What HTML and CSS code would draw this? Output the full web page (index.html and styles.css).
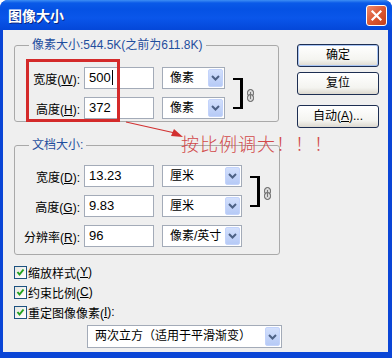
FILE: index.html
```html
<!DOCTYPE html>
<html>
<head>
  <meta charset="utf-8">
  <title>图像大小</title>
  <link rel="stylesheet" href="styles.css">
</head>
<body>
  <div class="window">
    <div class="titlebar">
      <span class="title">图像大小</span>
      <span class="close">
        <svg width="13" height="13" viewBox="0 0 13 13"><path d="M2.5 2.5 L10.5 10.5 M10.5 2.5 L2.5 10.5" stroke="#fff" stroke-width="2.2" stroke-linecap="square"/></svg>
      </span>
    </div>

    <div class="client">
      <div class="left">
        <fieldset class="group g1">
          <legend>像素大小:544.5K(之前为611.8K)</legend>
          <div class="linked">
            <div class="rows">
              <div class="row">
                <label>宽度(<u>W</u>):</label>
                <div class="field">500<span class="caret"></span></div>
                <div class="select s1"><span class="val">像素</span><span class="drop"><svg width="9" height="6" viewBox="0 0 9 6"><path d="M1 1 L4.5 4.5 L8 1" fill="none" stroke="#4d6185" stroke-width="2"/></svg></span></div>
              </div>
              <div class="row">
                <label>高度(<u>H</u>):</label>
                <div class="field">372</div>
                <div class="select s1"><span class="val">像素</span><span class="drop"><svg width="9" height="6" viewBox="0 0 9 6"><path d="M1 1 L4.5 4.5 L8 1" fill="none" stroke="#4d6185" stroke-width="2"/></svg></span></div>
              </div>
            </div>
            <div class="link">
              <div class="bracket"></div>
              <svg class="chain" width="7" height="13" viewBox="0 0 7 13"><rect x="0.5" y="0.5" width="6" height="7" rx="3" fill="#d8d8d8" stroke="#555"/><rect x="0.5" y="5.5" width="6" height="7" rx="3" fill="#d8d8d8" stroke="#555"/><path d="M3.5 3 V10" stroke="#777"/></svg>
            </div>
          </div>
        </fieldset>

        <fieldset class="group g2">
          <legend>文档大小:</legend>
          <div class="linked">
            <div class="rows">
              <div class="row">
                <label>宽度(<u>D</u>):</label>
                <div class="field">13.23</div>
                <div class="select s2"><span class="val">厘米</span><span class="drop"><svg width="9" height="6" viewBox="0 0 9 6"><path d="M1 1 L4.5 4.5 L8 1" fill="none" stroke="#4d6185" stroke-width="2"/></svg></span></div>
              </div>
              <div class="row">
                <label>高度(<u>G</u>):</label>
                <div class="field">9.83</div>
                <div class="select s2"><span class="val">厘米</span><span class="drop"><svg width="9" height="6" viewBox="0 0 9 6"><path d="M1 1 L4.5 4.5 L8 1" fill="none" stroke="#4d6185" stroke-width="2"/></svg></span></div>
              </div>
            </div>
            <div class="link">
              <div class="bracket"></div>
              <svg class="chain" width="7" height="13" viewBox="0 0 7 13"><rect x="0.5" y="0.5" width="6" height="7" rx="3" fill="#d8d8d8" stroke="#555"/><rect x="0.5" y="5.5" width="6" height="7" rx="3" fill="#d8d8d8" stroke="#555"/><path d="M3.5 3 V10" stroke="#777"/></svg>
            </div>
          </div>
          <div class="row res">
            <label>分辨率(<u>R</u>):</label>
            <div class="field">96</div>
            <div class="select s2"><span class="val">像素/英寸</span><span class="drop"><svg width="9" height="6" viewBox="0 0 9 6"><path d="M1 1 L4.5 4.5 L8 1" fill="none" stroke="#4d6185" stroke-width="2"/></svg></span></div>
          </div>
        </fieldset>

        <div class="checks">
          <div class="check"><span class="box"><svg width="11" height="11" viewBox="0 0 11 11"><path d="M2.5 5 L4.5 7.5 L8.5 2.5" fill="none" stroke="#21a121" stroke-width="2"/></svg></span>缩放样式(<u>Y</u>)</div>
          <div class="check"><span class="box"><svg width="11" height="11" viewBox="0 0 11 11"><path d="M2.5 5 L4.5 7.5 L8.5 2.5" fill="none" stroke="#21a121" stroke-width="2"/></svg></span>约束比例(<u>C</u>)</div>
          <div class="check"><span class="box"><svg width="11" height="11" viewBox="0 0 11 11"><path d="M2.5 5 L4.5 7.5 L8.5 2.5" fill="none" stroke="#21a121" stroke-width="2"/></svg></span>重定图像像素(<u>I</u>):</div>
        </div>

        <div class="select resample"><span class="val">两次立方（适用于平滑渐变）</span><span class="drop"><svg width="9" height="6" viewBox="0 0 9 6"><path d="M1 1 L4.5 4.5 L8 1" fill="none" stroke="#4d6185" stroke-width="2"/></svg></span></div>
      </div>

      <div class="buttons">
        <div class="btn default">确定</div>
        <div class="btn">复位</div>
        <div class="btn auto">自动(<u>A</u>)...</div>
      </div>
    </div>

    <!-- annotation drawn over the dialog -->
    <div class="mark"></div>
    <svg class="arrow" width="70" height="22" viewBox="0 0 70 22">
      <path d="M1 1 L50 12" stroke="#d23030" stroke-width="1.2"/>
      <path d="M58 16 L46 15 L49 8 Z" fill="#d23030"/>
    </svg>
    <div class="note">按比例调大！！！</div>
  </div>
</body>
</html>
```

FILE: styles.css
```css
body {
  margin: 0;
  background: #fff;
  font-family: "Liberation Sans", "Noto Sans CJK SC", sans-serif;
  font-size: 12px;
  color: #000;
}
.window {
  position: relative;
  width: 392px;
  height: 358px;
  display: flex;
  flex-direction: column;
  background: #0a45d6;
  border-radius: 8px 8px 0 0;
  overflow: hidden;
}
.titlebar {
  height: 30px;
  display: flex;
  align-items: center;
  padding: 0 5px 0 8px;
  background: linear-gradient(#3d8ef4 0, #0a5ae8 3px, #0552e4 9px, #0a56ea 60%, #0447d8 100%);
}
.title {
  flex: 1;
  color: #fff;
  font-weight: bold;
  font-size: 14px;
  text-shadow: 1px 1px #0a2580;
}
.close {
  width: 21px;
  height: 21px;
  box-sizing: border-box;
  border: 1px solid #fff;
  border-radius: 3px;
  background: linear-gradient(135deg, #ee8a6c, #d9552f 55%, #c4401c);
  display: flex;
  align-items: center;
  justify-content: center;
}
.client {
  flex: 1;
  margin: 0 4px 6px 3px;
  background: #efefef;
  display: flex;
  padding: 7px 0 0 11px;
}
.left {
  width: 266px;
}
fieldset.group {
  margin: 0;
  padding: 14px 0 2px 6px;
  border: 1px solid #a9a9a9;
  border-radius: 3px;
  box-sizing: border-box;
  min-width: 0;
}
.g1 {
  width: 265px;
}
.g2 {
  width: 266px;
  margin-top: 15px !important;
  padding-top: 12px !important;
  padding-bottom: 7px !important;
}
legend {
  padding: 0 3px;
  margin-left: 8px;
  line-height: 16px;
  height: 16px;
  color: #1f4e9e;
}
.linked {
  display: flex;
}
.row {
  display: flex;
  align-items: center;
  height: 22px;
}
.row + .row,
.row.res {
  margin-top: 8px;
}
.row label {
  width: 59px;
  text-align: right;
}
.field {
  margin-left: 4px;
  width: 70px;
  height: 22px;
  box-sizing: border-box;
  border: 1px solid #a3abb8;
  background: #fff;
  padding-left: 4px;
  font-size: 13px;
  line-height: 20px;
}
.caret {
  display: inline-block;
  width: 1px;
  height: 15px;
  background: #000;
  vertical-align: -3px;
  margin-left: 1px;
}
.select {
  margin-left: 8px;
  height: 22px;
  box-sizing: border-box;
  border: 1px solid #a3abb8;
  background: #fff;
  display: flex;
  padding: 1px 1px 1px 0;
}
.select .val {
  flex: 1;
  padding-left: 7px;
  line-height: 18px;
  white-space: nowrap;
  overflow: hidden;
}
.drop {
  width: 15px;
  box-sizing: border-box;
  border: 1px solid #c3d3fb;
  border-radius: 2px;
  background: linear-gradient(#d3e0fc, #b6caf6);
  display: flex;
  align-items: center;
  justify-content: center;
}
.s1 {
  width: 63px;
}
.s2 {
  width: 80px;
}
.link {
  display: flex;
  align-items: center;
  margin-left: 8px;
}
.bracket {
  width: 7px;
  height: 27px;
  border: 2px solid #000;
  border-left: 0;
  border-right-width: 3px;
}
.chain {
  margin-left: 4px;
  margin-top: 4px;
}
.checks {
  margin-top: 7px;
}
.check {
  display: flex;
  align-items: center;
  height: 20px;
}
.box {
  width: 13px;
  height: 13px;
  box-sizing: border-box;
  border: 1px solid #1c5180;
  background: linear-gradient(135deg, #e6e6e0, #fff);
  margin-right: 1px;
  display: flex;
  align-items: center;
  justify-content: center;
}
.resample {
  margin: 3px 0 0 73px;
  width: 195px;
  height: 23px;
}
.buttons {
  margin-left: 17px;
  padding-top: 7px;
  display: flex;
  flex-direction: column;
}
.btn {
  width: 82px;
  height: 23px;
  box-sizing: border-box;
  border: 1px solid #1d2e52;
  border-radius: 3px;
  background: linear-gradient(#fff, #f4f4f0 70%, #dcd8cf);
  text-align: center;
  line-height: 21px;
}
.btn + .btn {
  margin-top: 5px;
}
.btn.auto {
  margin-top: 10px;
}
.btn.default {
  box-shadow: inset 0 0 0 1px #a8c4f4;
}
.mark {
  position: absolute;
  left: 26px;
  top: 59px;
  width: 94px;
  height: 63px;
  box-sizing: border-box;
  border: 3px solid #d42a2a;
}
.arrow {
  position: absolute;
  left: 125px;
  top: 121px;
}
.note {
  position: absolute;
  left: 181px;
  top: 131px;
  font-family: "Noto Sans CJK SC", sans-serif;
  font-size: 18px;
  font-weight: 300;
  line-height: 24px;
  color: #d24a4a;
  letter-spacing: 1px;
}
```
